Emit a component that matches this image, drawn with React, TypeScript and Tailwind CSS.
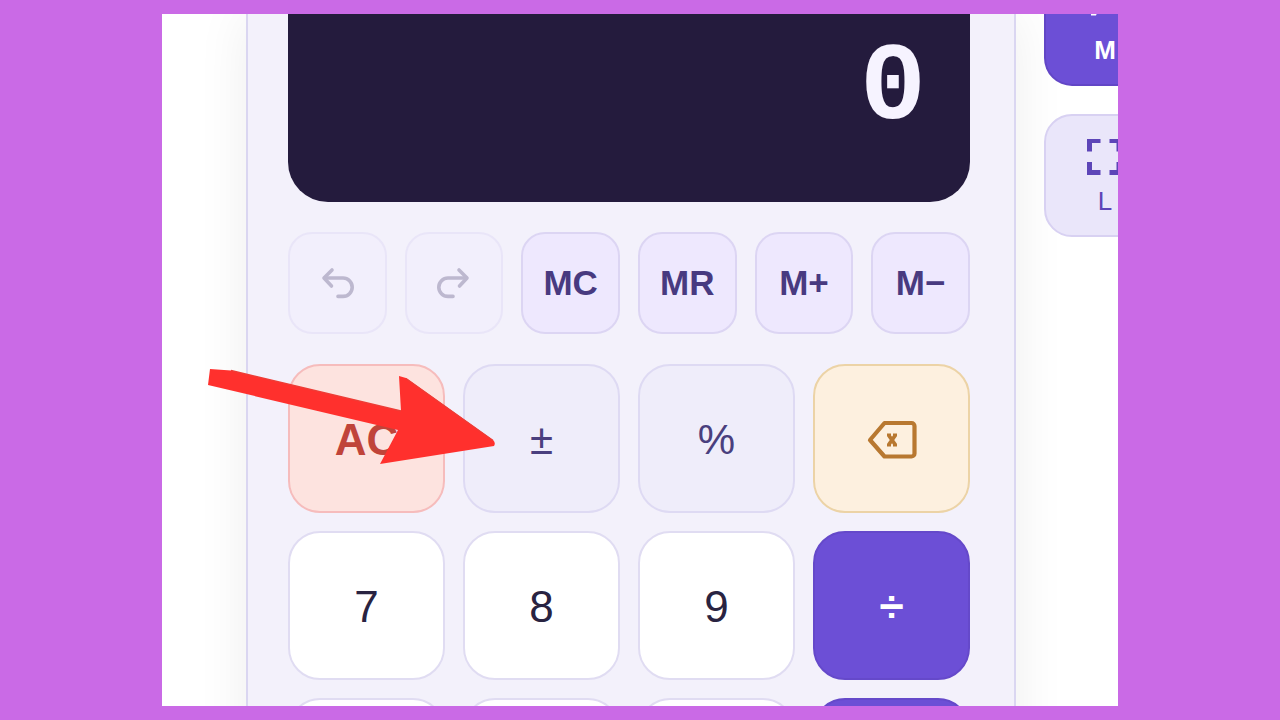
import type { ReactNode } from "react";

function UndoIcon({ flipped = false }: { flipped?: boolean }) {
  return (
    <svg
      viewBox="0 0 36 36"
      className={flipped ? "size-9 -scale-x-100" : "size-9"}
      fill="none"
      stroke="currentColor"
      strokeWidth="3.600"
      strokeLinecap="round"
      strokeLinejoin="round"
      aria-hidden="true"
    >
      <path d="M13 5 5 13l7.500 8" />
      <path d="M6 13H24a9.200 9.200 0 0 1 0 18.400H19" />
    </svg>
  );
}

function BackspaceIcon() {
  return (
    <svg
      viewBox="0 0 50 40"
      className="h-10 w-[50px]"
      fill="none"
      stroke="currentColor"
      strokeWidth="4.200"
      strokeLinejoin="round"
      aria-hidden="true"
    >
      <path d="M17.500 3H44.500a3 3 0 0 1 3 3V33.500a3 3 0 0 1-3 3H17.500L3 20Z" />
      <path strokeWidth="3.800" d="m21.500 15 7 10M28.500 15l-7 10" />
      <path strokeWidth="2.400" d="M20 14.800h4M26 14.800h4M20 25.200h4M26 25.200h4" />
    </svg>
  );
}

function ExpandIcon() {
  return (
    <svg
      viewBox="0 0 36 36"
      className="size-9 shrink-0"
      fill="none"
      stroke="currentColor"
      strokeWidth="5"
      aria-hidden="true"
    >
      <path d="M2.500 12.500v-11h11M22.500 1.500h9.500v11M32 23v10.500h-9.500M13.500 33.500h-11V23" />
    </svg>
  );
}

function PointerIcon() {
  return (
    <svg viewBox="0 0 36 36" className="size-9 shrink-0" fill="currentColor" aria-hidden="true">
      <path d="M3 4 22 14l-9 4-4 9.500H4Z" />
    </svg>
  );
}

const memoryBase =
  "flex h-[102px] items-center justify-center rounded-3xl border-2 text-[35px] leading-none font-bold";

const memoryKeys: { label: string; content: ReactNode; disabled?: boolean }[] = [
  { label: "Undo", content: <UndoIcon />, disabled: true },
  { label: "Redo", content: <UndoIcon flipped />, disabled: true },
  { label: "Memory clear", content: "MC" },
  { label: "Memory recall", content: "MR" },
  { label: "Memory add", content: "M+" },
  { label: "Memory subtract", content: "M−" },
];

const tones = {
  clear: "border-[#f6bcbc] bg-[#fde3df] text-[44px] font-bold text-[#c0443a]",
  helper: "border-[#dedaf3] bg-[#efedfa] text-[42px] text-[#4a3f7e]",
  erase: "border-[#ecd3a6] bg-[#fdf0df] text-[44px] text-[#b87830]",
  digit: "border-[#e0dcf2] bg-white text-[44px] text-[#292341]",
  operator: "border-[#6549ca] bg-[#6c4fd6] text-[44px] font-bold text-white",
};

const keys: { label: string; content?: ReactNode; tone: keyof typeof tones }[] = [
  { label: "All clear", content: "AC", tone: "clear" },
  { label: "Plus or minus", content: "±", tone: "helper" },
  { label: "Percent", content: "%", tone: "helper" },
  { label: "Backspace", content: <BackspaceIcon />, tone: "erase" },
  { label: "7", content: "7", tone: "digit" },
  { label: "8", content: "8", tone: "digit" },
  { label: "9", content: "9", tone: "digit" },
  { label: "Divide", content: "÷", tone: "operator" },
  { label: "4", tone: "digit" },
  { label: "5", tone: "digit" },
  { label: "6", tone: "digit" },
  { label: "Multiply", tone: "operator" },
];

function Calculator() {
  return (
    <main className="min-w-0 flex-1 self-start border-x-2 border-[#dad6f1] bg-[#f3f1fb] pr-11 pl-10 shadow-[0_0_50px_rgba(0,0,0,0.07)]">
      <output
        aria-label="Result"
        className="flex h-[188px] items-start justify-end rounded-b-[40px] bg-[#241b3d] px-11 pt-5 font-['Liberation_Mono',monospace] text-[110px] leading-none font-bold text-[#f6f3ff]"
      >
        0
      </output>
      <div className="mt-[30px] grid grid-cols-6 gap-[18px]">
        {memoryKeys.map((key) => (
          <button
            key={key.label}
            type="button"
            aria-label={key.label}
            disabled={key.disabled}
            className={
              key.disabled
                ? `${memoryBase} border-[#e9e5f8] bg-[#f2effc] text-[#bdb8cf]`
                : `${memoryBase} border-[#dcd5f3] bg-[#eee8fe] pb-0.5 text-[#483a80]`
            }
          >
            {key.content}
          </button>
        ))}
      </div>
      <div className="mt-[30px] grid auto-rows-[149px] grid-cols-4 gap-[18px]">
        {keys.map((key) => (
          <button
            key={key.label}
            type="button"
            aria-label={key.label}
            className={`flex items-center justify-center rounded-[32px] border-2 pt-0.5 leading-none ${tones[key.tone]}`}
          >
            {key.content}
          </button>
        ))}
      </div>
    </main>
  );
}

const sideBase =
  "flex flex-col items-center justify-end gap-3 rounded-[28px] border-2 pb-5 text-[26px] leading-7";

export default function App() {
  return (
    <div className="h-screen bg-[#ca6ae6] px-[162px] py-[14px] font-['Liberation_Sans',Arial,sans-serif]">
      <div className="relative flex h-full overflow-hidden bg-white pl-[84px]">
        <Calculator />
        <aside className="-mr-12 ml-7 flex w-[122px] shrink-0 flex-col gap-7">
          <button
            type="button"
            aria-label="Mode"
            className={`${sideBase} h-[72px] rounded-t-none border-t-0 border-[#6246c6] bg-[#6c4fd6] font-bold text-white`}
          >
            <PointerIcon />M
          </button>
          <button
            type="button"
            aria-label="Layout"
            className={`${sideBase} h-[123px] border-[#d8d1f2] bg-[#eae6fa] text-[#5d45b8]`}
          >
            <ExpandIcon />L
          </button>
        </aside>
        <svg
          viewBox="0 0 290 98"
          className="pointer-events-none absolute top-[354px] left-[45px] h-[98px] w-[290px]"
          aria-hidden="true"
        >
          <path
            fill="#ff302d"
            d="M3 1 24 2.500 194 43 192 8 199 10 286 72Q289 75 287 78L173 96 191 62 1 17Z"
          />
          <path
            fill="none"
            stroke="#ee3c36"
            strokeWidth="1.500"
            d="M24 2.500 194 43M199 10.500 286 72.500"
          />
        </svg>
      </div>
    </div>
  );
}
